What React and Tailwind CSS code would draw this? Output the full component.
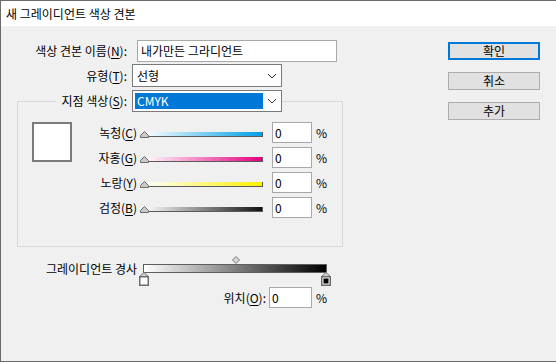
import React from "react";

const font = { fontFamily: '"Noto Sans CJK KR", "Noto Sans", sans-serif' };

const Chevron = () => (
  <svg width="10" height="6" viewBox="0 0 10 6" className="shrink-0">
    <path d="M1 1 L5 5 L9 1" fill="none" stroke="#333" strokeWidth="1" />
  </svg>
);

const Key = ({ children }) => <span className="underline underline-offset-2">{children}</span>;

const Thumb = () => (
  <svg width="9" height="7" viewBox="0 0 9 7" className="absolute left-0 top-0">
    <polygon points="4.5,0.5 8.5,4.5 8.5,6.5 0.5,6.5 0.5,4.5" fill="#c9c9c9" stroke="#6b6b6b" strokeWidth="1" />
  </svg>
);

const Stop = ({ dark }) => (
  <svg width="10" height="14" viewBox="0 0 10 14">
    <polygon points="5,0.5 9.5,4.5 0.5,4.5" fill="#d0d0d0" stroke="#7a7a7a" strokeWidth="1" />
    <rect x="0" y="4" width="10" height="10" fill="#6d6d6d" />
    <rect x="1.5" y="5.5" width="7" height="7" fill="#fff" />
    {dark && <rect x="2.5" y="6.5" width="5" height="5" fill="#000" />}
  </svg>
);

const sliders = [
  { name: "녹청", key: "C", grad: "bg-[linear-gradient(to_right,#ffffff,#00a0e6)]" },
  { name: "자홍", key: "G", grad: "bg-[linear-gradient(to_right,#ffffff,#e4007f)]" },
  { name: "노랑", key: "Y", grad: "bg-[linear-gradient(to_right,#ffffff,#fff000)]" },
  { name: "검정", key: "B", grad: "bg-[linear-gradient(to_right,#ffffff,#111111)]" },
];

export default function App() {
  return (
    <div
      style={font}
      className="w-[556px] h-[362px] overflow-hidden flex flex-col border-l border-t border-b border-[#6b6b6b] bg-[#f0f0f0] text-[12px] leading-[16px] text-black"
    >
      {/* Title bar */}
      <div className="h-[25px] bg-white flex items-center pl-[5px] shrink-0">
        새 그레이디언트 색상 견본
      </div>

      <div className="flex flex-1">
        {/* Form */}
        <div className="w-[447px] pt-[14px] flex flex-col">
          <div className="flex items-center h-[22px]">
            <div className="w-[126px] text-right">
              색상 견본 이름(<Key>N</Key>):
            </div>
            <div className="ml-[10px] w-[200px] h-[22px] bg-white border border-[#a8a8a8] flex items-center pl-[3px]">
              내가만든 그라디언트
            </div>
          </div>

          <div className="flex items-center h-[23px] mt-[2px]">
            <div className="w-[126px] text-right">
              유형(<Key>T</Key>):
            </div>
            <div className="ml-[5px] w-[150px] h-[23px] bg-white border border-[#7a7a7a] flex items-center justify-between pl-[4px] pr-[4px]">
              <span>선형</span>
              <Chevron />
            </div>
          </div>

          {/* Group box */}
          <div className="mt-[14px] ml-[16px] w-[326px] h-[146px] border border-[#d9d9d9] flex flex-col">
            <div className="flex items-center h-[22px] -mt-[12px]">
              <div className="w-[114px] flex justify-end">
                <span className="bg-[#f0f0f0] pl-[6px] pr-[5px]">
                  지점 색상(<Key>S</Key>):
                </span>
              </div>
              <div className="w-[150px] h-[22px] bg-white border border-[#7a7a7a] flex items-center justify-between pl-[2px] pr-[4px]">
                <div className="w-[128px] h-[16px] bg-[#0078d7] text-white flex items-center pl-[2px]">CMYK</div>
                <Chevron />
              </div>
            </div>

            <div className="flex mt-[10px]">
              <div className="ml-[14px] w-[40px] h-[40px] border-2 border-[#7a7a7a] bg-white shrink-0" />
              <div className="flex flex-col gap-[4px]">
                {sliders.map((s) => (
                  <div key={s.key} className="flex items-center h-[21px]">
                    <div className="w-[65px] text-right">
                      {s.name}(<Key>{s.key}</Key>)
                    </div>
                    <div className="relative ml-[3px] w-[124px] h-[7px] mt-[4px]">
                      <div className={`absolute left-[3px] top-[1px] w-[120px] h-[5px] border-b border-r border-[#5a5a5a] ${s.grad}`} />
                      <Thumb />
                    </div>
                    <div className="ml-[8px] w-[40px] h-[21px] bg-white border border-[#a8a8a8] pl-[2px] flex items-center">
                      0
                    </div>
                    <span className="ml-[4px]">%</span>
                  </div>
                ))}
              </div>
            </div>
          </div>

          {/* Gradient ramp */}
          <div className="flex items-center mt-[17px] h-[9px]">
            <div className="w-[136px] text-right">그레이디언트 경사</div>
            <div className="relative ml-[6px] w-[184px] h-[9px] border border-[#5e5e5e] bg-[linear-gradient(to_right,#ffffff,#000000)]">
              <svg width="8" height="8" viewBox="0 0 8 8" className="absolute -top-[9px] left-[88px]">
                <polygon points="4,0.5 7.5,4 4,7.5 0.5,4" fill="#d8d8d8" stroke="#777" strokeWidth="1" />
              </svg>
              <div className="absolute top-[7px] -left-[5px]">
                <Stop />
              </div>
              <div className="absolute top-[7px] -right-[5px]">
                <Stop dark />
              </div>
            </div>
          </div>

          <div className="flex items-center mt-[14px] h-[21px]">
            <div className="w-[265px] text-right">
              위치(<Key>O</Key>):
            </div>
            <div className="ml-[3px] w-[43px] h-[21px] bg-white border border-[#a8a8a8] pl-[2px] flex items-center">
              0
            </div>
            <span className="ml-[4px]">%</span>
          </div>
        </div>

        {/* Buttons */}
        <div className="pt-[16px] flex flex-col gap-[12px]">
          <button className="w-[92px] h-[18px] bg-[#e1e1e1] border-2 border-[#0078d7] flex items-center justify-center leading-none">
            확인
          </button>
          <button className="w-[92px] h-[18px] bg-[#e1e1e1] border border-[#adadad] flex items-center justify-center leading-none">
            취소
          </button>
          <button className="w-[92px] h-[18px] bg-[#e1e1e1] border border-[#adadad] flex items-center justify-center leading-none">
            추가
          </button>
        </div>
      </div>
    </div>
  );
}
